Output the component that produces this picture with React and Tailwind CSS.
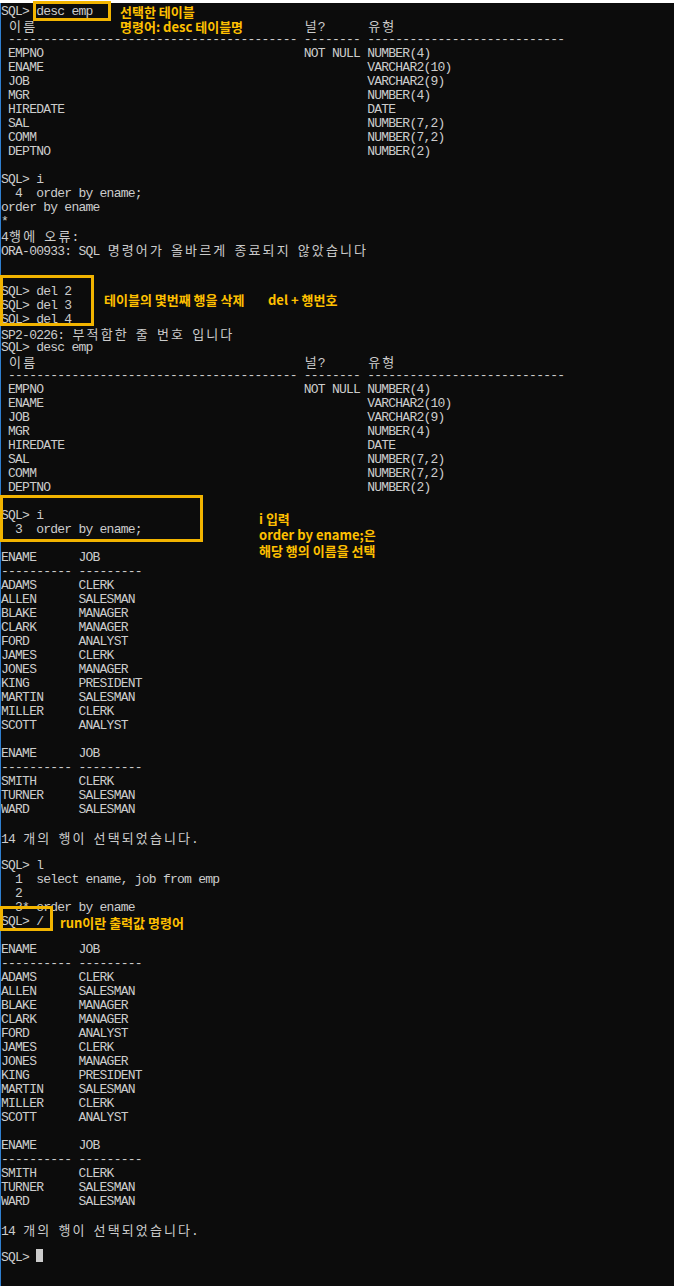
import React from "react";

const HANGUL = /([\u1100-\u11ff\u3130-\u318f\uac00-\ud7af])/;

const pad = (s, n) => (s.length >= n ? s : s + " ".repeat(n - s.length));
const dash = (n) => "-".repeat(n);

const descRows = [
  ["EMPNO", "NOT NULL", "NUMBER(4)"],
  ["ENAME", "", "VARCHAR2(10)"],
  ["JOB", "", "VARCHAR2(9)"],
  ["MGR", "", "NUMBER(4)"],
  ["HIREDATE", "", "DATE"],
  ["SAL", "", "NUMBER(7,2)"],
  ["COMM", "", "NUMBER(7,2)"],
  ["DEPTNO", "", "NUMBER(2)"],
];

const descBlock = [
  " 이름" + " ".repeat(38) + "널?" + " ".repeat(6) + "유형",
  " " + dash(41) + " " + dash(8) + " " + dash(28),
  ...descRows.map(([n, nl, t]) => pad(pad(" " + n, 43) + nl, 52) + t),
];

const emp1 = [
  ["ADAMS", "CLERK"],
  ["ALLEN", "SALESMAN"],
  ["BLAKE", "MANAGER"],
  ["CLARK", "MANAGER"],
  ["FORD", "ANALYST"],
  ["JAMES", "CLERK"],
  ["JONES", "MANAGER"],
  ["KING", "PRESIDENT"],
  ["MARTIN", "SALESMAN"],
  ["MILLER", "CLERK"],
  ["SCOTT", "ANALYST"],
];
const emp2 = [
  ["SMITH", "CLERK"],
  ["TURNER", "SALESMAN"],
  ["WARD", "SALESMAN"],
];

const head = ["ENAME      JOB", dash(10) + " " + dash(9)];
const rows = (r) => r.map(([a, b]) => pad(a, 11) + b);

const empBlock = [
  ...head,
  ...rows(emp1),
  "",
  ...head,
  ...rows(emp2),
  "",
  "14 개의 행이 선택되었습니다.",
];

const lines = [
  "SQL> desc emp",
  ...descBlock,
  "",
  "SQL> i",
  "  4  order by ename;",
  "order by ename",
  "*",
  "4행에 오류:",
  "ORA-00933: SQL 명령어가 올바르게 종료되지 않았습니다",
  "",
  "",
  "SQL> del 2",
  "SQL> del 3",
  "SQL> del 4",
  "SP2-0226: 부적합한 줄 번호 입니다",
  "SQL> desc emp",
  ...descBlock,
  "",
  "SQL> i",
  "  3  order by ename;",
  "",
  ...empBlock,
  "",
  "SQL> l",
  "  1  select ename, job from emp",
  "  2",
  "  3* order by ename",
  "SQL> /",
  "",
  ...empBlock,
  "",
];

function Line({ text, children }) {
  const parts = (text || "").split(HANGUL);
  return (
    <div className="h-[14px] pt-[2px] whitespace-pre">
      {parts.map((p, i) =>
        i % 2 === 1 ? (
          <span
            key={i}
            className="inline-block w-[14.08px] text-center font-['Noto_Sans_CJK_KR'] tracking-normal"
          >
            {p}
          </span>
        ) : (
          <React.Fragment key={i}>{p}</React.Fragment>
        )
      )}
      {children}
    </div>
  );
}

const note =
  "absolute whitespace-pre font-['Noto_Sans_CJK_KR',sans-serif] font-bold text-[13px] text-[#ffc000]";
const box = "absolute border-[3px] border-[#f2b400]";

export default function App() {
  return (
    <div className="relative w-[674px] h-[1286px] overflow-hidden bg-[#0c0c0c]">
      <div className="h-[3px] bg-white" />
      <div className="flex flex-col h-[1283px] border-l border-[#2f7fd0] font-['Liberation_Mono','Noto_Sans_CJK_KR',monospace] text-[13px] leading-[14px] tracking-[-0.76px] text-[#cccccc]">
        {lines.map((t, i) => (
          <Line key={i} text={t} />
        ))}
        <Line text="SQL> ">
          <span className="inline-block w-[7px] h-[13px] -mt-[2px] bg-[#cccccc] align-top" />
        </Line>
      </div>

      <div className={`${box} left-[33px] top-[1px] w-[78px] h-[20px]`} />
      <div className={`${note} left-[120px] top-[4px] leading-[15px]`}>
        <div>선택한 테이블</div>
        <div>명령어: desc 테이블명</div>
      </div>

      <div className={`${box} left-0 top-[275px] w-[94px] h-[51px]`} />
      <div className={`${note} left-[104px] top-[292px] leading-[15px]`}>테이블의 몇번째 행을 삭제</div>
      <div className={`${note} left-[268px] top-[292px] leading-[15px]`}>del + 행번호</div>

      <div className={`${box} left-0 top-[495px] w-[203px] h-[47px]`} />
      <div className={`${note} left-[259px] top-[511px] leading-[16px]`}>
        <div>i 입력</div>
        <div>order by ename;은</div>
        <div>해당 행의 이름을 선택</div>
      </div>

      <div className={`${box} left-0 top-[906px] w-[53px] h-[25px]`} />
      <div className={`${note} left-[60px] top-[915px] leading-[15px]`}>run이란 출력값 명령어</div>
    </div>
  );
}
